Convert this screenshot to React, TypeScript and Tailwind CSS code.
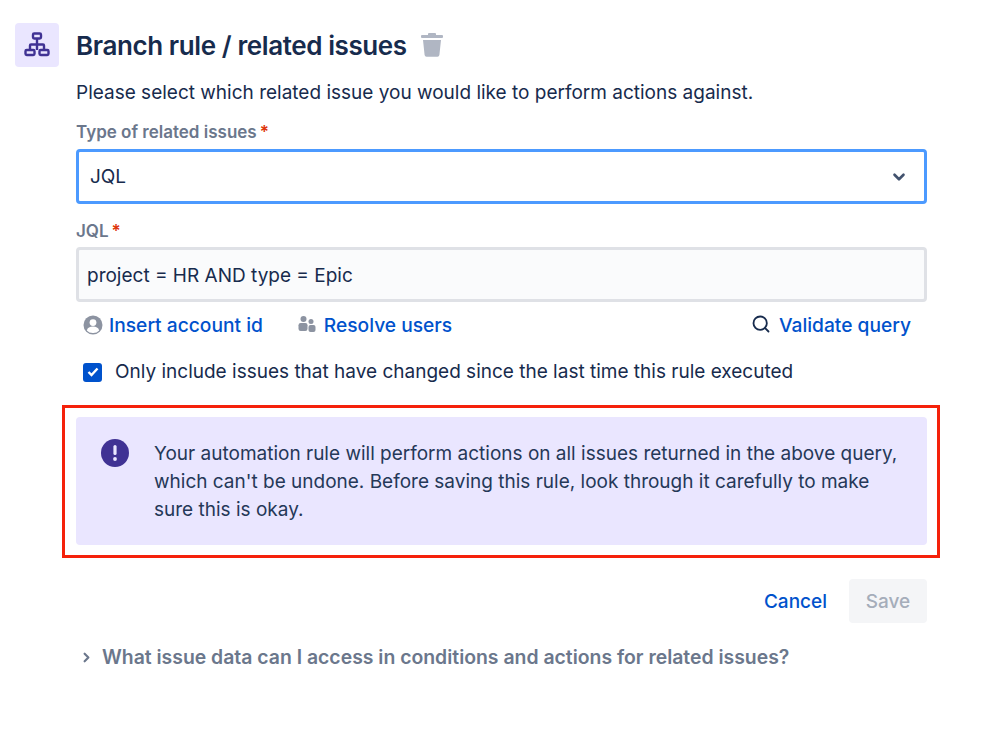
import React from 'react';
import { ChevronDown, ChevronRight, Search } from 'lucide-react';

const font = "font-['Inter',sans-serif]";

const BranchIcon = () => (
  <svg width="26" height="26" viewBox="0 0 26 26" fill="none" stroke="#403294" strokeWidth="2.4">
    <rect x="9" y="1.5" width="8" height="5" rx="1.2" />
    <rect x="1.5" y="18" width="9" height="5" rx="1.2" />
    <rect x="15.5" y="18" width="9" height="5" rx="1.2" />
    <path d="M13 6.5V18M6 18v-4.5a1 1 0 0 1 1-1h12a1 1 0 0 1 1 1V18" />
  </svg>
);

const TrashIcon = () => (
  <svg width="24" height="26" viewBox="0 0 24 26" fill="#B0B6C3" className="-mt-[2px]">
    <rect x="1" y="3" width="22" height="3" rx="1" />
    <rect x="8" y="1" width="8" height="3" rx="1" />
    <path d="M3 8h18l-1.6 15a2 2 0 0 1-2 1.8H6.6a2 2 0 0 1-2-1.8z" />
  </svg>
);

const UserCircle = () => (
  <svg width="20" height="20" viewBox="0 0 20 20">
    <circle cx="10" cy="10" r="9.5" fill="#8C93A1" />
    <circle cx="10" cy="7.6" r="3.4" fill="#fff" />
    <path d="M3.8 15.4c.8-2.6 3-3.8 6.2-3.8s5.4 1.2 6.2 3.8A8 8 0 0 1 10 18a8 8 0 0 1-6.2-2.6z" fill="#fff" />
  </svg>
);

const PeopleIcon = () => (
  <svg width="18" height="18" viewBox="0 0 18 18" fill="#8C93A1">
    <circle cx="5.5" cy="4" r="3" />
    <circle cx="13" cy="6.5" r="2.5" />
    <rect x="0.5" y="8" width="9" height="8" rx="2.2" />
    <rect x="10.5" y="10" width="7" height="7" rx="2" />
  </svg>
);

const Label = ({ children }: { children: React.ReactNode }) => (
  <div className="text-[17px] leading-[20px] font-semibold text-[#6B778C]">
    {children}
    <span className="ml-[3px] text-[#DE350B]">*</span>
  </div>
);

export default function App() {
  return (
    <div className={`${font} w-[999px] h-[736px] bg-white overflow-hidden flex gap-[17px] pl-[15px] pt-[23px] text-[#172B4D]`}>
      <div className="w-[44px] h-[44px] rounded-[4px] bg-[#EAE6FF] flex items-center justify-center shrink-0">
        <BranchIcon />
      </div>

      <div className="w-[851px] flex flex-col">
        <div className="flex items-center gap-[13px] h-[46px]">
          <h1 className="text-[26px] leading-[46px] font-semibold tracking-[-0.4px]">Branch rule / related issues</h1>
          <TrashIcon />
        </div>
        <p className="mt-[11px] text-[19px] leading-[26px]">
          Please select which related issue you would like to perform actions against.
        </p>

        <div className="mt-[16px]"><Label>Type of related issues</Label></div>
        <div className="mt-[7px] h-[55px] border-[3px] border-[#4C9AFF] rounded-[4px] flex items-center justify-between pl-[11px] pr-[16px] text-[19px]">
          <span className="pt-[2px]">JQL</span>
          <ChevronDown size={18} strokeWidth={3.5} className="text-[#42526E]" />
        </div>

        <div className="mt-[17px]"><Label>JQL</Label></div>
        <div className="mt-[6px] h-[55px] border-[3px] border-[#DFE1E6] bg-[#FAFBFC] rounded-[4px] flex items-center pl-[8px] pt-[3px] text-[19px]">
          project = HR AND type = Epic
        </div>

        <div className="mt-[13px] h-[20px] flex items-center justify-between pl-[7px] pr-[16px] text-[19.2px] font-medium text-[#0052CC]">
          <div className="flex items-center">
            <UserCircle />
            <span className="ml-[6px]">Insert account id</span>
            <span className="ml-[35px] flex items-center -mt-[2px]"><PeopleIcon /></span>
            <span className="ml-[8px]">Resolve users</span>
          </div>
          <div className="flex items-center gap-[8px]">
            <Search size={20} strokeWidth={2.2} className="text-[#172B4D] -mt-[2px]" />
            <span>Validate query</span>
          </div>
        </div>

        <div className="mt-[25px] flex items-center pl-[7px] text-[19px] leading-[24px]">
          <span className="w-[19px] h-[19px] rounded-[3px] bg-[#0052CC] flex items-center justify-center">
            <svg width="12" height="10" viewBox="0 0 12 10" fill="none" stroke="#fff" strokeWidth="2.4">
              <path d="M1.5 5l3 3 6-6.5" />
            </svg>
          </span>
          <span className="ml-[13px]">Only include issues that have changed since the last time this rule executed</span>
        </div>

        {/* red annotation round the message */}
        <div className="mt-[21px] -ml-[14px] -mr-[13px] border-[3px] border-[#F5210A] pl-[11px] pr-[10px] pt-[9px] pb-[10px]">
          <div className="h-[128px] rounded-[4px] bg-[#EAE6FF] flex pl-[25px] pr-[27px] pt-[22px]">
            <div className="w-[28px] h-[28px] rounded-full bg-[#403294] flex items-center justify-center shrink-0">
              <svg width="4" height="16" viewBox="0 0 4 16" fill="#EAE6FF">
                <rect x="0.4" y="0" width="3.2" height="10" rx="1.6" />
                <circle cx="2" cy="14" r="1.9" />
              </svg>
            </div>
            <p className="ml-[25px] mt-[1px] text-[19px] leading-[28px] text-[#253858]">
              Your automation rule will perform actions on all issues returned in the above query, which can't be undone. Before saving this rule, look through it carefully to make sure this is okay.
            </p>
          </div>
        </div>

        <div className="mt-[21px] flex items-center justify-end">
          <span className="text-[19px] font-medium text-[#0052CC] pt-[2px]">Cancel</span>
          <span className="ml-[22px] w-[78px] h-[44px] rounded-[4px] bg-[#F4F5F7] flex items-center justify-center pt-[2px] text-[19px] font-medium text-[#A5ADBA]">Save</span>
        </div>

        <div className="mt-[20px] flex items-center text-[19.4px] font-semibold text-[#6B778C]">
          <ChevronRight size={15} strokeWidth={3.5} className="ml-[3px] text-[#6B778C]" />
          <span className="ml-[8px]">What issue data can I access in conditions and actions for related issues?</span>
        </div>
      </div>
    </div>
  );
}
